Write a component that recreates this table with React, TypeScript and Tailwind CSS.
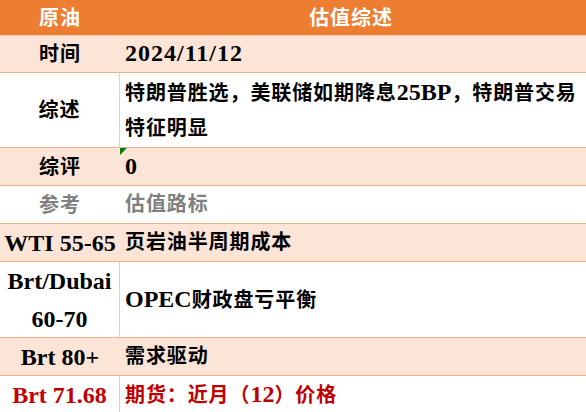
import type { ReactNode } from "react"

const font = { fontFamily: '"Liberation Serif", "Noto Sans CJK SC", serif' }

// latin runs are set a size up, like the reference's wider latin face
function L({ children, wide }: { children: ReactNode; wide?: boolean }) {
    return <span className={`text-[24px] ${wide ? "tracking-[1px]" : "tracking-normal"}`}>{children}</span>
}

type RowProps = {
    label: ReactNode
    value: ReactNode
    h: string
    peach?: boolean
    divider?: boolean
    tone?: string
    flag?: boolean
}

function Row({ label, value, h, peach, divider, tone = "text-black", flag }: RowProps) {
    return (
        <div className={`flex border-b border-[#F4B084] ${h} ${peach ? "bg-[#FCE4D6]" : "bg-white"} ${tone}`}>
            <div className={`w-[120px] shrink-0 flex items-center justify-center text-center leading-[38px] ${divider ? "border-r border-[#D4D4D4]" : ""}`}>
                {label}
            </div>
            <div className="relative flex-1 flex items-center pl-[5px] leading-[35px]">
                {flag && (
                    <div className="absolute left-0 top-0 w-0 h-0 border-t-[7px] border-r-[7px] border-t-[#008000] border-r-transparent" />
                )}
                <div>{value}</div>
            </div>
        </div>
    )
}

export default function App() {
    return (
        <div className="w-[586px] h-[412px] overflow-hidden bg-white text-[20px] font-bold tracking-[0.9px]" style={font}>
            {/* header */}
            <div className="flex h-[36px] bg-[#ED7D31] text-white border-b border-[#F8CBAD]">
                <div className="w-[120px] flex items-center justify-center">原油</div>
                <div className="flex-1 flex items-center justify-center pr-[4px]">估值综述</div>
            </div>

            <Row peach h="h-[37px]" label="时间" value={<L wide>2024/11/12</L>} />
            <Row
                divider
                h="h-[75px]"
                label="综述"
                value={
                    <>
                        特朗普胜选，美联储如期降息<L>25BP</L>，特朗普交易
                        <br />
                        特征明显
                    </>
                }
            />
            <Row peach flag h="h-[38px]" label="综评" value={<L>0</L>} />
            <Row h="h-[38px]" tone="text-[#808080]" label="参考" value="估值路标" />
            <Row peach h="h-[38px]" label={<L>WTI 55-65</L>} value="页岩油半周期成本" />
            <Row
                divider
                h="h-[76px]"
                label={
                    <L>
                        Brt/Dubai
                        <br />
                        60-70
                    </L>
                }
                value={
                    <>
                        <L>OPEC</L>财政盘亏平衡
                    </>
                }
            />
            <Row peach h="h-[38px]" label={<L>Brt 80+</L>} value="需求驱动" />
            <Row
                divider
                h="h-[38px]"
                tone="text-[#C00000]"
                label={<L>Brt 71.68</L>}
                value={
                    <>
                        期货：近月（<L>12</L>）价格
                    </>
                }
            />
        </div>
    )
}
